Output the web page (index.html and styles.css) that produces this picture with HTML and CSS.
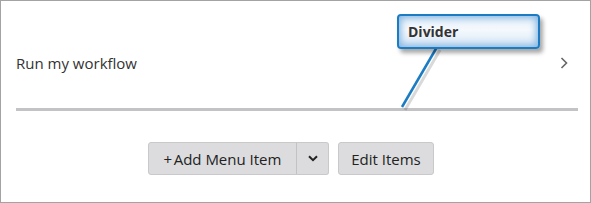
FILE: index.html
```html
<!DOCTYPE html>
<html lang="en">
  <head>
    <meta charset="utf-8">
    <title>Menu Items</title>
    <link rel="stylesheet" href="styles.css">
  </head>
  <body>
    <div class="frame">
      <div class="menu-row">
        <span class="menu-label">Run my workflow</span>
        <svg class="chevron-right" width="8" height="12" viewBox="0 0 8 12">
          <polyline points="1.5,1 6.5,6 1.5,11" fill="none" stroke="#666" stroke-width="1.6"/>
        </svg>
      </div>
      <div class="divider"></div>
      <div class="actions">
        <div class="split-btn">
          <button type="button" class="btn btn-main">+&#8202;Add Menu Item</button>
          <button type="button" class="btn btn-caret">
            <svg width="10" height="7" viewBox="0 0 10 7">
              <polyline points="1,1.2 5,5.2 9,1.2" fill="none" stroke="#222" stroke-width="2"/>
            </svg>
          </button>
        </div>
        <button type="button" class="btn btn-edit">Edit Items</button>
      </div>

      <!-- annotation callout -->
      <svg class="callout-line" width="591" height="203">
        <line x1="440" y1="50" x2="405" y2="110" stroke="rgba(0,0,0,0.15)" stroke-width="3"/>
        <line x1="437" y1="47" x2="402" y2="107" stroke="#1b7cc3" stroke-width="2.5"/>
      </svg>
      <div class="callout">Divider</div>
    </div>
  </body>
</html>
```
FILE: styles.css
```css
html, body {
  margin: 0;
  padding: 0;
  background-color: white;
}

.frame {
  position: relative;
  box-sizing: border-box;
  width: 591px;
  height: 203px;
  border: 1px solid #a3a3a3;
  padding: 17px 12px 0 15px;
  font-family: "Open Sans", "Noto Sans", sans-serif;
  color: #333;
}

.menu-row {
  display: flex;
  align-items: center;
  justify-content: space-between;
  height: 90px;
}

.menu-label {
  font-size: 15px;
}

.chevron-right {
  margin-right: 10px;
}

.divider {
  height: 3px;
  background-color: #c3c3c6;
}

.actions {
  display: flex;
  justify-content: center;
  gap: 9px;
  margin-top: 31px;
  padding-right: 12px;
}

.split-btn {
  display: flex;
}

.btn {
  box-sizing: border-box;
  height: 33px;
  border: 1px solid #c9c9cc;
  background-color: #dcdcde;
  color: #222;
  font-family: "Open Sans", "Noto Sans", sans-serif;
  font-size: 15px;
  border-radius: 3px;
  padding: 0;
  cursor: pointer;
}

.btn-main {
  width: 149px;
  border-radius: 3px 0 0 3px;
}

.btn-caret {
  width: 33px;
  border-radius: 0 3px 3px 0;
  border-left-color: #c2c2c5;
  margin-left: -1px;
  display: flex;
  align-items: center;
  justify-content: center;
}

.btn-edit {
  width: 96px;
}

.callout-line {
  position: absolute;
  left: -1px;
  top: -1px;
  pointer-events: none;
}

.callout {
  position: absolute;
  left: 396px;
  top: 13px;
  box-sizing: border-box;
  width: 143px;
  height: 35px;
  border: 2px solid #1b7cc3;
  border-radius: 4px;
  background: linear-gradient(to bottom, #e4eff9, #f5f9fd 45%, #d6e6f6);
  box-shadow: inset 0 0 7px 2px #86b7e2, 3px 4px 4px rgba(0, 0, 0, 0.35);
  padding: 6px 0 0 9px;
  font-size: 14px;
  font-weight: bold;
  color: #333;
}
```
